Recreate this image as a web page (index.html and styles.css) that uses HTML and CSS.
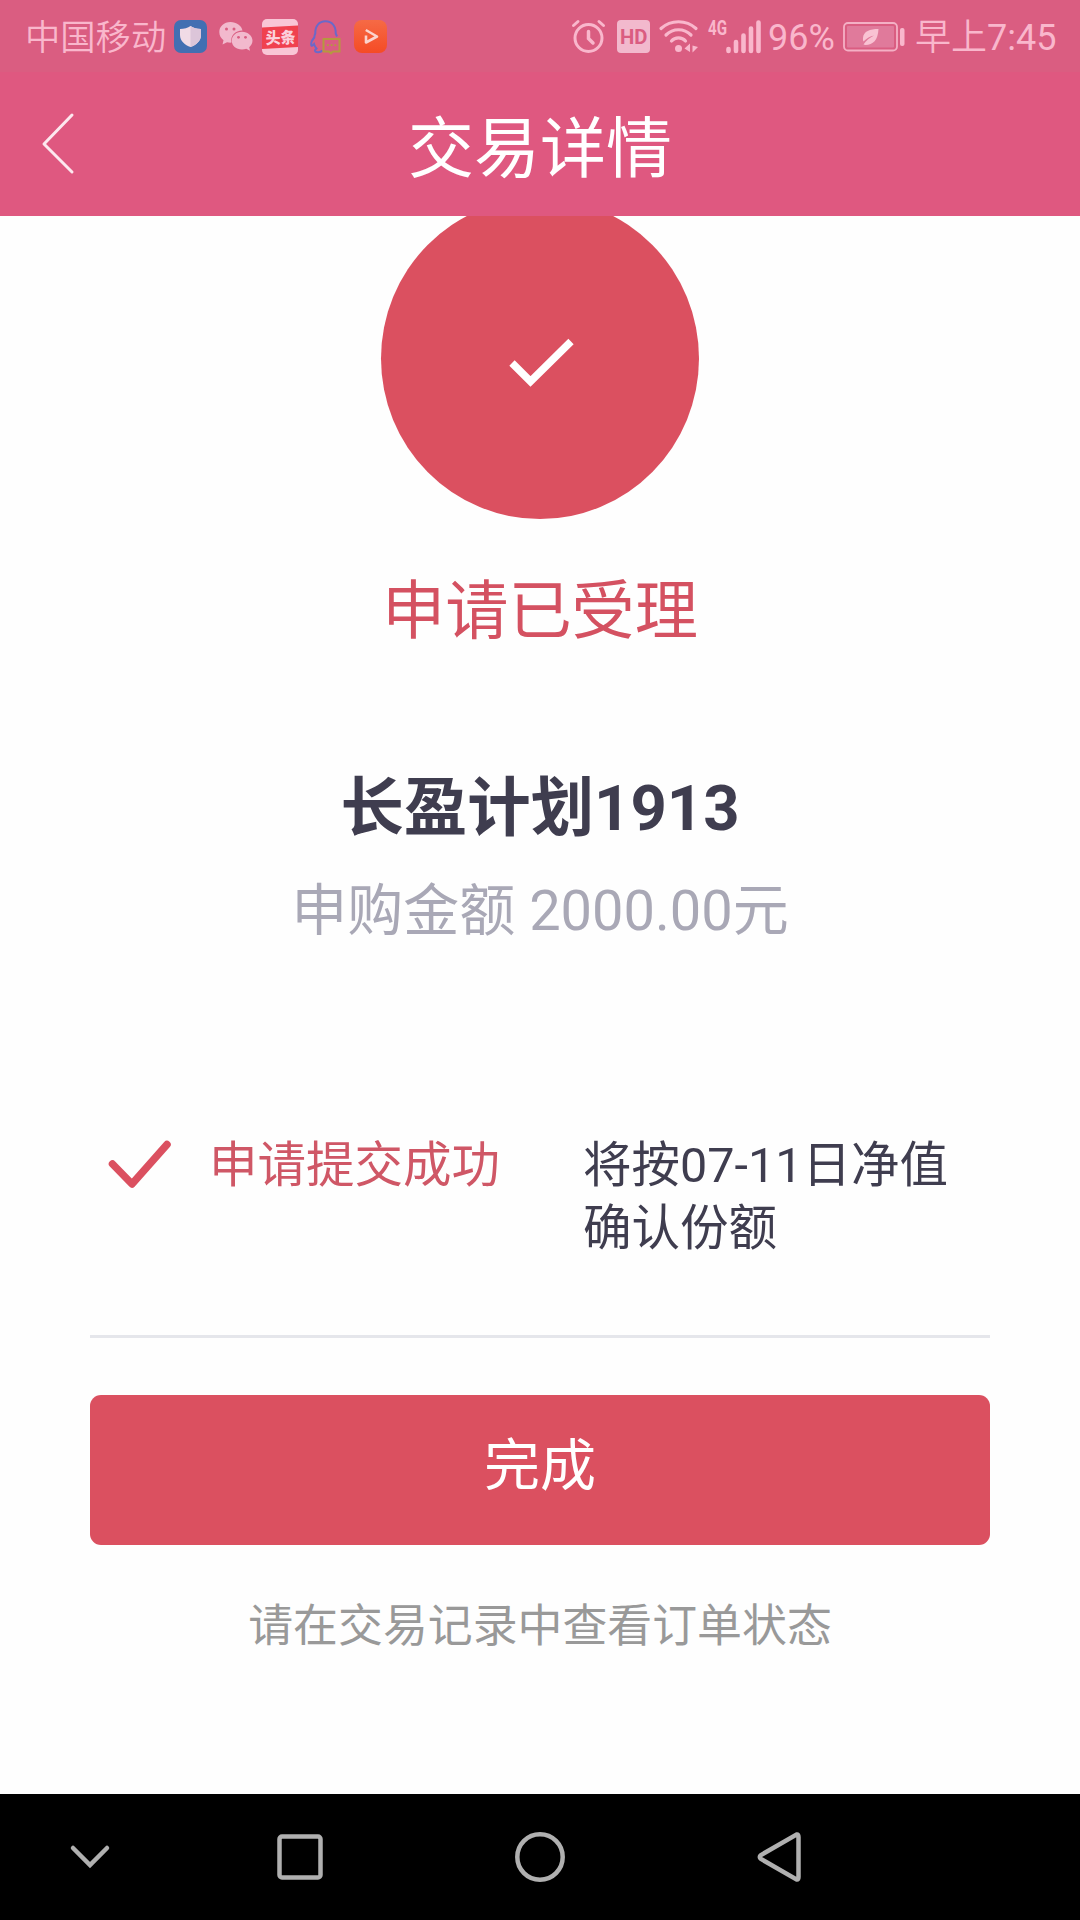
FILE: index.html
```html
<!DOCTYPE html>
<html lang="zh-CN">
<head>
    <meta charset="UTF-8">
    <title>交易详情</title>
    <link rel="stylesheet" href="styles.css">
</head>
<body>
    <div class="status-bar">
        <span class="carrier">中国移动</span>
        <div class="status-apps">
            <svg width="33" height="33" viewBox="0 0 33 33">
                <rect width="33" height="33" rx="7" fill="#426fb2"/>
                <path d="M16.5 6C19 8 23 9 27 9V15C27 21 22 25 16.5 27C11 25 6 21 6 15V9C10 9 14 8 16.5 6Z" fill="#f1dbe6"/>
                <path d="M16.5 6C19 8 23 9 27 9V15C27 21 22 25 16.5 27Z" fill="#dcc5d9"/>
            </svg>
            <svg width="34" height="33" viewBox="0 0 34 33">
                <path d="M11.500 2C5 2 .3 6.500 .3 12C.3 15.500 2 18.200 4.500 20.200L3.500 24.500L8 22.200C9.500 22.600 11 22.700 12.500 22.600C11 16 16.500 10.500 23.500 10.600C22.500 5.500 17.500 2 11.500 2Z" fill="#f2b9cd"/>
                <path d="M23 11.800C17 11.800 12.800 15.800 12.800 20.800C12.800 25.800 17 29.500 23 29.500C24.500 29.500 26 29.200 27.300 28.700L31 30.800L30.200 27.200C32.200 25.500 33.500 23.300 33.500 20.800C33.500 15.800 28.800 11.800 23 11.800Z" fill="#f2b9cd"/>
                <g fill="#da5d81">
                    <circle cx="7.500" cy="9" r="1.500"/>
                    <circle cx="15" cy="9" r="1.500"/>
                    <circle cx="19.500" cy="17.300" r="1.400"/>
                    <circle cx="26.500" cy="17.300" r="1.400"/>
                </g>
            </svg>
            <svg class="toutiao" width="36" height="36" viewBox="0 0 36 36">
                <rect width="36" height="36" rx="5" fill="#f9c6d6"/>
                <path d="M0 8.500L36 6.500V28L0 30Z" fill="#f0414f"/>
                <text x="3.500" y="24.500" textLength="30" lengthAdjust="spacingAndGlyphs" transform="rotate(-2 18 18)" class="toutiao-text">头条</text>
            </svg>
            <svg width="32" height="34" viewBox="0 0 32 34">
                <path d="M12.500 30.500C10 33 5 32.500 5 30.500C5 29.500 6 29 6.500 28.500C5 27 4.500 25.500 4 24C2.500 26 1.300 26.500 1.200 24.500C1 22 2.500 19.500 4.300 17.500C4.300 15.500 4.800 14.500 5.300 13.500C5 6 9 1.200 15.500 1.200C22 1.200 26 6 25.700 13.500L27 16.500" fill="none" stroke="#6a69c9" stroke-width="2"/>
                <path d="M13.500 19H29.500V31.500H23L21 33.300L19 31.500H13.500Z" fill="none" stroke="#b5993f" stroke-width="2"/>
                <path d="M17 25.200h1.800M20.700 25.200h1.800M24.400 25.200h1.800" stroke="#b5993f" stroke-width="1.800"/>
            </svg>
            <svg width="33" height="33" viewBox="0 0 33 33">
                <defs>
                    <linearGradient id="orange" x1="0" y1="0" x2="0" y2="1">
                        <stop offset="0" stop-color="#f66a45"/>
                        <stop offset="1" stop-color="#f54b25"/>
                    </linearGradient>
                </defs>
                <rect width="33" height="33" rx="8" fill="url(#orange)"/>
                <path d="M11.800 10L23 16.500L12 22.500V15.500" fill="none" stroke="#fbd3cd" stroke-width="2.600" stroke-linejoin="round"/>
            </svg>
        </div>
        <div class="status-system">
            <svg class="alarm" width="33" height="33" viewBox="0 0 33 33" fill="none" stroke="#f9b7cc" stroke-linecap="round">
                <circle cx="16.500" cy="18" r="13.500" stroke-width="3"/>
                <path d="M16.500 11.500V18.500L21 23" stroke-width="3.500"/>
                <path d="M1.500 5.500L6 1.500M27 1.500L31.500 5.500" stroke-width="3"/>
            </svg>
            <svg class="hd" width="33" height="33" viewBox="0 0 33 33">
                <rect width="33" height="33" rx="4" fill="#f2b9cd"/>
                <text x="3" y="24" textLength="27.500" lengthAdjust="spacingAndGlyphs" class="hd-text">HD</text>
            </svg>
            <svg class="wifi" width="40" height="34" viewBox="0 0 40 34" fill="none" stroke="#f9b7cc" stroke-width="3.200" stroke-linecap="round">
                <path d="M2 8.500C12 -.5 27 -.5 37 8.500M7 15C14 8 25 8 32 15M12.500 21C16 16.800 23 16.800 26.500 21"/>
                <circle cx="19.500" cy="28.500" r="3.500" fill="#f9b7cc" stroke="none"/>
                <path d="M25.500 28.500L31 23.500V32ZM33.500 25.500L39 27L33.500 32.500Z" fill="#f9b7cc" stroke="none"/>
            </svg>
            <svg class="signal" width="54" height="36" viewBox="0 -2 54 36">
                <text x="0" y="13.500" textLength="19" lengthAdjust="spacingAndGlyphs" class="net-text">4G</text>
                <g stroke="#f9b7cc" stroke-width="4.600" stroke-linecap="round">
                    <path d="M20.500 28V30M28 21V30M35.500 14.500V30M43 7.500V30M50.500 1.500V30"/>
                </g>
            </svg>
            <span class="percent">96%</span>
            <svg class="battery" width="62" height="30" viewBox="0 0 62 30">
                <rect x="1" y="1" width="53" height="27.500" rx="4" fill="none" stroke="#f4b0c5" stroke-width="1.800"/>
                <rect x="4" y="4" width="47" height="21.500" rx="1" fill="#e07a9b"/>
                <rect x="57" y="6" width="4.500" height="18" rx="2" fill="#f9b7cc"/>
                <path d="M35.500 7C27 7 20.500 9 20 16C19.900 17.500 20 18.500 20.500 19.500C24 16 27 14.500 31 13.500C27 15.500 23 18.500 20.500 22.500L22.500 23C30 23 35 18 35.500 7Z" fill="#f9c2d3"/>
            </svg>
            <span class="time">早上<span class="clock">7:45</span></span>
        </div>
    </div>

    <div class="header">
        <svg class="back" width="32" height="62" viewBox="0 0 32 62">
            <path d="M30 2L2 31L30 59" fill="none" stroke="#fde8ef" stroke-width="3" stroke-linejoin="round" stroke-linecap="round"/>
        </svg>
        <h1>交易详情</h1>
    </div>

    <div class="content">
        <div class="circle">
            <svg width="68" height="50" viewBox="0 0 68 50">
                <path d="M4 25L22.500 43.500L63 3.500" fill="none" stroke="#fff" stroke-width="7.500"/>
            </svg>
        </div>
        <p class="accepted">申请已受理</p>
        <p class="plan-name">长盈计划1913</p>
        <p class="amount">申购金额 2000.00元</p>

        <div class="step">
            <svg width="64" height="50" viewBox="0 0 64 50">
                <path d="M4.500 24L24 44L59 4.500" fill="none" stroke="#db5060" stroke-width="7.500" stroke-linejoin="round" stroke-linecap="round"/>
            </svg>
            <span class="step-title">申请提交成功</span>
            <span class="step-desc">将按07-11日净值确认份额</span>
        </div>

        <button class="done-button">完成</button>
        <p class="hint">请在交易记录中查看订单状态</p>
    </div>

    <div class="nav-bar">
        <svg class="nav-down" width="40" height="24" viewBox="0 0 40 24">
            <path d="M3 3L20 20L37 3"/>
        </svg>
        <svg class="nav-recent" width="46" height="46" viewBox="0 0 46 46">
            <rect x="2.500" y="2.500" width="41" height="41" rx="2.500"/>
        </svg>
        <svg class="nav-home" width="50" height="50" viewBox="0 0 50 50">
            <circle cx="25" cy="25" r="22.700"/>
        </svg>
        <svg class="nav-back" width="44" height="50" viewBox="0 0 44 50">
            <path d="M39.500 2.500Q41.500 2 41.500 5V45Q41.500 48 39.500 47.500L4 27Q1.500 25 4 23Z"/>
        </svg>
    </div>
</body>
</html>
```
FILE: styles.css
```css
* {
    box-sizing: border-box;
}

body {
    margin: 0;
    height: 1920px;
    display: flex;
    flex-direction: column;
    background-color: #fefefe;
    font-family: Roboto, "Noto Sans CJK SC", sans-serif;
    overflow: hidden;
}

svg {
    display: block;
    flex-shrink: 0;
    overflow: visible;
}

h1, p {
    margin: 0;
    font-weight: 400;
}

.status-bar {
    display: flex;
    justify-content: space-between;
    align-items: center;
    height: 72px;
    padding: 1px 24px 0 25px;
    background-color: #da5d81;
    color: #f9b7cc;
    font-size: 36px;
    line-height: 74px;
    white-space: nowrap;
}

.carrier {
    width: 149px;
    height: 72px;
    font-size: 35.3px;
    font-weight: 350;
}

.status-apps {
    display: flex;
    align-items: center;
    gap: 12px;
    margin-right: auto;
}

.toutiao {
    margin: 0 0 -1px -3px;
}

.status-system {
    display: flex;
    align-items: center;
    height: 72px;
}

.hd {
    margin-left: 12px;
}

.wifi {
    margin-left: 9px;
}

.signal {
    margin-left: 9px;
}

.percent {
    width: 75px;
    height: 72px;
    margin-left: 6px;
}

.time {
    width: 141px;
    height: 72px;
    margin-left: 10px;
    font-weight: 350;
}

.clock {
    font-weight: 400;
}

.toutiao-text {
    font-size: 16px;
    font-weight: 900;
    fill: #fbd0dc;
}

.hd-text {
    font-size: 21px;
    font-weight: 700;
    fill: #da5d81;
}

.net-text {
    font-size: 20px;
    font-weight: 700;
    fill: #f9b7cc;
}

.header {
    display: flex;
    align-items: center;
    height: 144px;
    padding: 0 42px;
    background-color: #df5880;
    color: #fff;
}

.header h1 {
    flex: 1;
    height: 144px;
    padding-right: 32px;
    font-size: 66px;
    line-height: 156px;
    text-align: center;
}

.content {
    flex: 1;
    display: flex;
    flex-direction: column;
    align-items: center;
    padding: 0 90px;
    overflow: hidden;
}

/* o topo do circulo fica escondido pelo header */
.circle {
    flex-shrink: 0;
    display: flex;
    justify-content: center;
    align-items: center;
    width: 318px;
    height: 321px;
    margin-top: -18px;
    padding: 9px 0 0 4px;
    border-radius: 50%;
    background-color: #db5060;
}

.accepted {
    height: 90px;
    margin-top: 47px;
    color: #d45161;
    font-size: 63.200px;
    line-height: 90px;
}

.plan-name {
    height: 90px;
    margin-top: 107px;
    color: #3f3d4f;
    font-size: 63.400px;
    font-weight: 700;
    line-height: 90px;
}

.amount {
    height: 80px;
    margin-top: 18px;
    color: #a9a8b6;
    font-size: 56px;
    line-height: 80px;
}

.step {
    display: flex;
    align-items: flex-start;
    width: 100%;
    height: 206px;
    margin-top: 181px;
    padding-left: 18px;
    border-bottom: 3px solid #e5e6eb;
    font-size: 48.500px;
    line-height: 63px;
}

.step svg {
    margin-top: 8px;
}

.step-title {
    width: 374px;
    margin-top: 2px;
    margin-left: 37px;
    color: #cf5766;
}

.step-desc {
    flex: 1;
    margin-top: 2px;
    color: #3f3d4f;
}

.done-button {
    width: 100%;
    height: 150px;
    margin-top: 57px;
    padding: 0 0 19px;
    border: none;
    border-radius: 11px;
    background-color: #db5060;
    color: #fff;
    font-family: inherit;
    font-size: 56px;
}

.hint {
    height: 60px;
    margin-top: 52px;
    color: #999;
    font-size: 44.900px;
    line-height: 60px;
}

.nav-bar {
    display: flex;
    align-items: center;
    height: 126px;
    padding-left: 70px;
    background-color: #000;
}

.nav-bar svg {
    fill: none;
    stroke: #b0b0b0;
    stroke-width: 4.5;
    stroke-linecap: round;
}

.nav-recent {
    margin-left: 167px;
}

.nav-home {
    margin-left: 192px;
}

.nav-back {
    margin-left: 192px;
}
```
